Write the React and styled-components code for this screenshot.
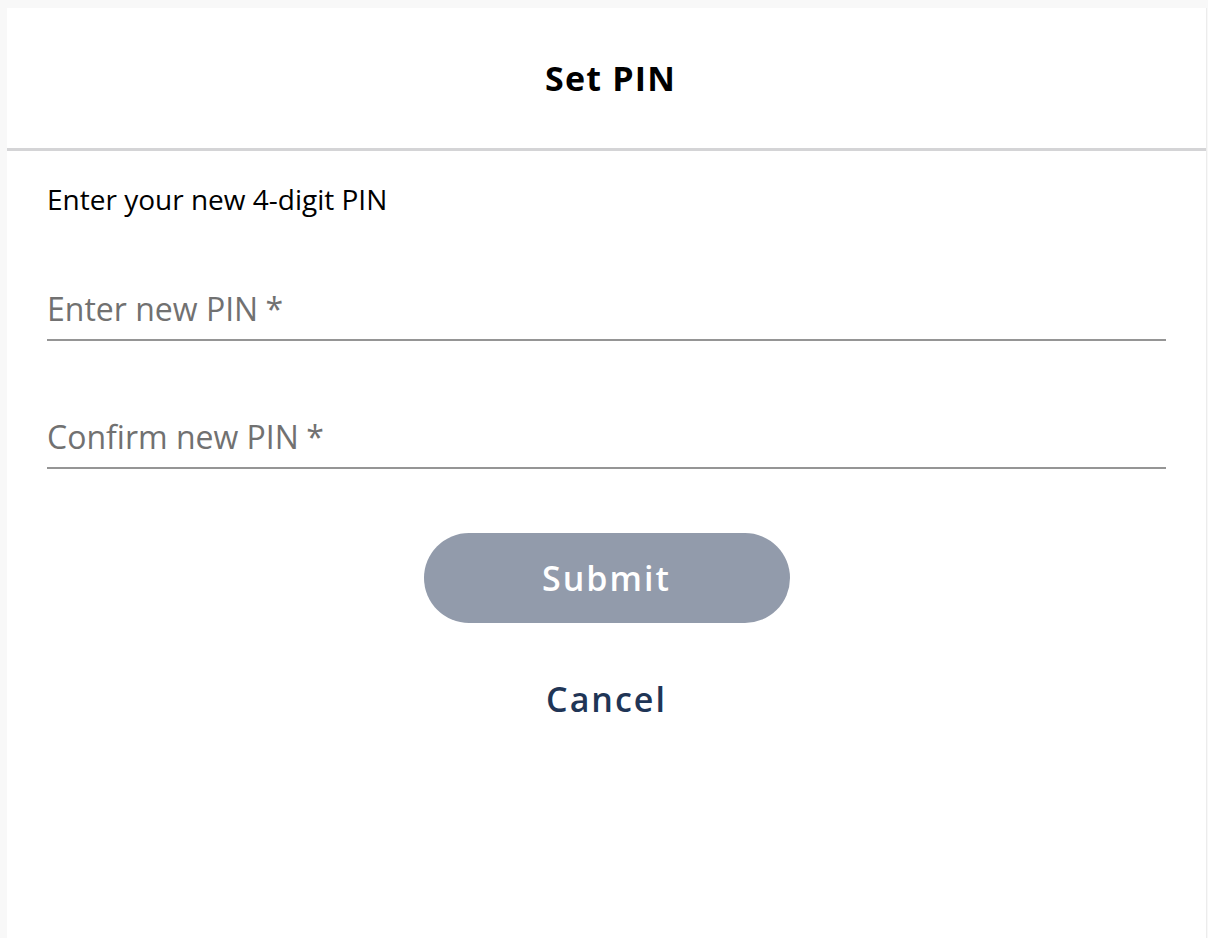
import React from "react";
import styled, { createGlobalStyle } from "styled-components";

const Global = createGlobalStyle`
  html, body { margin: 0; padding: 0; background: #f8f8f8; }
  body { font-family: "Open Sans", "Noto Sans", sans-serif; }
  * { box-sizing: border-box; }
`;

const Page = styled.div`
  min-height: 938px;
  padding: 8px 0 0 7px;
  display: flex;
`;

const Card = styled.div`
  width: 1200px;
  min-height: 930px;
  background: #ffffff;
  border-right: 1px solid #ececec;
  display: flex;
  flex-direction: column;
`;

const Header = styled.header`
  height: 143px;
  padding-left: 8px;
  display: flex;
  align-items: center;
  justify-content: center;
  border-bottom: 3px solid #d4d4d6;
`;

const Title = styled.h1`
  margin: 0;
  font-size: 34px;
  font-weight: 700;
  color: #000;
  letter-spacing: 1.2px;
`;

const Body = styled.div`
  padding: 0 40px;
  display: flex;
  flex-direction: column;
`;

const Intro = styled.p`
  margin: 30px 0 0;
  font-size: 28px;
  color: #000;
  line-height: 36px;
`;

const Field = styled.label`
  display: block;
  margin-top: ${(p) => p.$top}px;
  border-bottom: 2px solid #959595;
  padding-bottom: 10px;
`;

const Placeholder = styled.span`
  font-size: 32px;
  color: #717171;
  line-height: 40px;
  display: block;
`;

const Asterisk = styled.span`
  margin-left: 2px;
`;

const Actions = styled.div`
  display: flex;
  flex-direction: column;
  align-items: center;
  margin-top: 64px;
`;

const SubmitButton = styled.button`
  width: 366px;
  height: 90px;
  border: none;
  border-radius: 45px;
  background: #929bab;
  color: #ffffff;
  font-family: inherit;
  font-size: 34px;
  font-weight: 600;
  letter-spacing: 2px;
`;

const CancelButton = styled.button`
  margin-top: 52px;
  border: none;
  background: none;
  color: #1f3556;
  font-family: inherit;
  font-size: 34px;
  font-weight: 600;
  letter-spacing: 2px;
`;

export default function App() {
  return (
    <>
      <Global />
      <Page>
        <Card>
          <Header>
            <Title>Set PIN</Title>
          </Header>
          <Body>
            <Intro>Enter your new 4-digit PIN</Intro>
            <Field $top={72}>
              <Placeholder>
                Enter new PIN<Asterisk>{"\u2009*"}</Asterisk>
              </Placeholder>
            </Field>
            <Field $top={76}>
              <Placeholder>
                Confirm new PIN<Asterisk>{"\u2009*"}</Asterisk>
              </Placeholder>
            </Field>
            <Actions>
              <SubmitButton>Submit</SubmitButton>
              <CancelButton>Cancel</CancelButton>
            </Actions>
          </Body>
        </Card>
      </Page>
    </>
  );
}
